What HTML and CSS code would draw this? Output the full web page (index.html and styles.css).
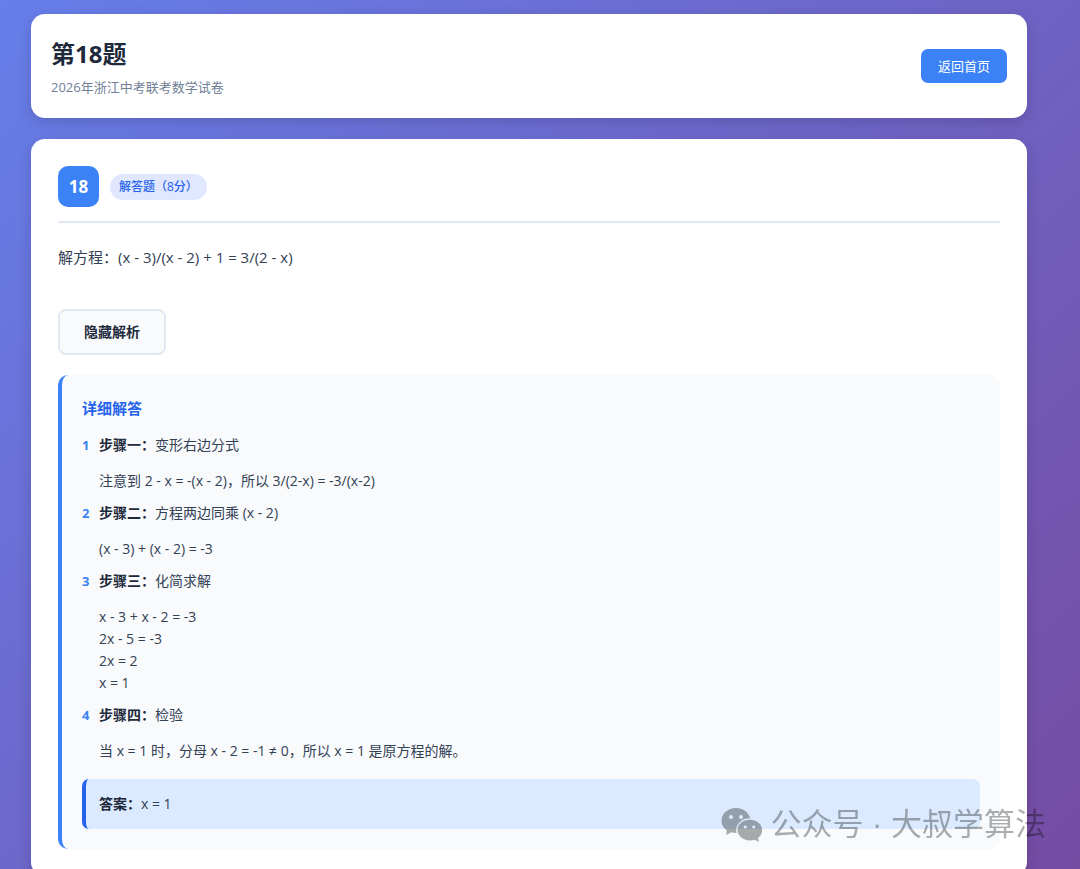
FILE: index.html
```html
<!DOCTYPE html>
<html lang="zh-CN">
<head>
<meta charset="utf-8">
<meta name="viewport" content="width=device-width, initial-scale=1">
<title>第18题</title>
<link rel="stylesheet" href="styles.css">
</head>
<body>
<div class="page">
  <header class="card header">
    <div>
      <h1 class="title">第18题</h1>
      <p class="subtitle">2026年浙江中考联考数学试卷</p>
    </div>
    <a class="home-link" href="#">返回首页</a>
  </header>

  <main class="card question">
    <div class="question-head">
      <span class="number">18</span>
      <span class="type">解答题（8分）</span>
    </div>
    <p class="question-text">解方程：(x - 3)/(x - 2) + 1 = 3/(2 - x)</p>
    <button class="toggle" type="button">隐藏解析</button>

    <section class="solution">
      <h2 class="solution-title">详细解答</h2>
      <ol class="steps">
        <li class="step">
          <p><strong>步骤一：</strong>变形右边分式</p>
          <p class="detail">注意到 2 - x = -(x - 2)，所以 3/(2-x) = -3/(x-2)</p>
        </li>
        <li class="step">
          <p><strong>步骤二：</strong>方程两边同乘 (x - 2)</p>
          <p class="detail">(x - 3) + (x - 2) = -3</p>
        </li>
        <li class="step">
          <p><strong>步骤三：</strong>化简求解</p>
          <p class="detail">x - 3 + x - 2 = -3<br>2x - 5 = -3<br>2x = 2<br>x = 1</p>
        </li>
        <li class="step">
          <p><strong>步骤四：</strong>检验</p>
          <p class="detail">当 x = 1 时，分母 x - 2 = -1 ≠ 0，所以 x = 1 是原方程的解。</p>
        </li>
      </ol>
      <p class="answer"><strong>答案：</strong>x = 1</p>
    </section>
  </main>
</div>

<div class="watermark">
  <svg class="watermark-icon" viewBox="0 0 42 36" aria-hidden="true">
    <defs>
      <mask id="back-bubble">
        <rect width="42" height="36" fill="#fff"/>
        <ellipse cx="28.500" cy="23" rx="13.300" ry="11.800" fill="#000"/>
        <circle cx="10" cy="10" r="2" fill="#000"/>
        <circle cx="20" cy="10" r="2" fill="#000"/>
      </mask>
      <mask id="front-bubble">
        <rect width="42" height="36" fill="#fff"/>
        <circle cx="24.200" cy="20" r="1.600" fill="#000"/>
        <circle cx="32.800" cy="20" r="1.600" fill="#000"/>
      </mask>
    </defs>
    <path mask="url(#back-bubble)" d="M15 1C7 1 .5 6.600 .5 13.800c0 4 2 7.400 5.300 9.700L5.200 28l5-2.700c1.500.5 3.200.8 4.800.8 8 0 14.500-5.300 14.500-12.300S23 1 15 1z"/>
    <path mask="url(#front-bubble)" d="M28.800 12.800c-6.900 0-12.300 4.600-12.300 10.300s5.400 10.400 12.300 10.400c1.500 0 3-.3 4.400-.7l4.800 2-1-3.700c2.600-1.900 4.200-4.800 4.200-8 0-5.700-5.500-10.300-12.400-10.300z"/>
  </svg>
  <span>公众号 · 大叔学算法</span>
</div>
</body>
</html>
```

FILE: styles.css
```css
* {
  box-sizing: border-box;
  margin: 0;
  padding: 0;
}

html {
  scrollbar-width: none;
}

body {
  min-height: 100vh;
  padding: 14px 53px 14px 31px;
  background: linear-gradient(135deg, #667eea 0%, #764ba2 100%);
  color: #334155;
  font-family: "Open Sans", "Noto Sans CJK SC", sans-serif;
  font-size: 14px;
  line-height: 22px;
}

.page {
  display: flex;
  flex-direction: column;
  gap: 21px;
}

.card {
  background: #fff;
  border-radius: 14px;
  box-shadow: 0 4px 14px rgba(0, 0, 0, 0.15);
}

.header {
  display: flex;
  align-items: center;
  justify-content: space-between;
  padding: 20px;
}

.title {
  margin-bottom: 2px;
  color: #1e293b;
  font-size: 24px;
  line-height: 40px;
}

.subtitle {
  color: #718096;
  font-size: 13px;
}

.home-link {
  padding: 6px 17px;
  border-radius: 7px;
  background: #3b82f6;
  color: #fff;
  font-size: 13px;
  text-decoration: none;
}

.question {
  padding: 27px;
}

.question-head {
  display: flex;
  align-items: center;
  gap: 11px;
  padding-bottom: 14px;
  border-bottom: 2px solid #e2e8f0;
}

.number {
  display: grid;
  place-items: center;
  width: 41px;
  height: 41px;
  border-radius: 10px;
  background: #3b82f6;
  color: #fff;
  font-size: 17px;
  font-weight: 700;
}

.type {
  padding: 2px 9px;
  border-radius: 14px;
  background: #e0e7ff;
  color: #2563eb;
  font-size: 12px;
  font-weight: 500;
}

.question-text {
  margin: 21px 0 39px;
  font-size: 15px;
  line-height: 26px;
}

.toggle {
  display: block;
  padding: 10px 24px;
  border: 2px solid #e2e8f0;
  border-radius: 8px;
  background: #f8fafc;
  color: #1e293b;
  font: inherit;
  font-weight: 600;
}

.solution {
  margin-top: 20px;
  padding: 20px;
  border-left: 4px solid #3b82f6;
  border-radius: 10px;
  background: #f8fafc;
}

.solution-title {
  margin-bottom: 13px;
  color: #2563eb;
  font-size: 15px;
  line-height: 26px;
}

.steps {
  display: flex;
  flex-direction: column;
  gap: 10px;
  list-style: none;
  counter-reset: step;
}

.step {
  display: grid;
  grid-template-columns: 17px 1fr;
  counter-increment: step;
}

.step::before {
  content: counter(step);
  color: #3b82f6;
  font-size: 13px;
  font-weight: 700;
}

.detail {
  grid-column: 2;
  margin-top: 14px;
}

strong {
  color: #1e293b;
}

.answer {
  margin-top: 17px;
  padding: 14px 13px;
  border-left: 4px solid #2563eb;
  border-radius: 7px;
  background: #dbeafe;
}

.watermark {
  position: fixed;
  right: 34px;
  bottom: 22px;
  display: flex;
  align-items: center;
  gap: 7px;
  color: #000;
  font-family: "Liberation Sans", "Noto Sans CJK SC", sans-serif;
  font-size: 31px;
  font-weight: 400;
  line-height: 44px;
  opacity: 0.32;
  pointer-events: none;
}

.watermark-icon {
  width: 42px;
  height: 36px;
  fill: currentColor;
}
```
